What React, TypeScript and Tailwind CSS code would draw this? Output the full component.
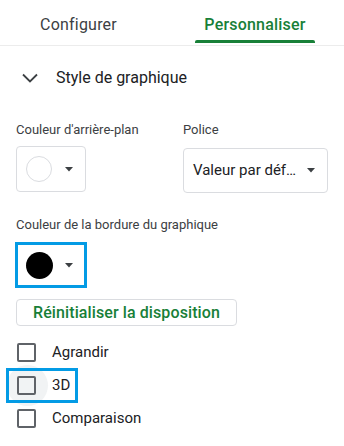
import React from "react";

const Arrow = () => (
  <svg width="10" height="5" viewBox="0 0 10 5" className="block">
    <path d="M1 0 L9 0 L5 4.5 Z" fill="#3c4043" />
  </svg>
);

const Checkbox = ({ label, highlight }: { label: string; highlight?: boolean }) => (
  <div className="relative flex items-center h-[33px]">
    {highlight && (
      <>
        <div className="absolute left-[7px] top-[-4px] w-[41px] h-[41px] rounded-full bg-[#f1f3f4]" />
        <div className="absolute left-[6px] top-[-1px] w-[72px] h-[35px] border-[3px] border-[#039be5]" />
      </>
    )}
    <div className="relative ml-[17px] w-[19px] h-[19px] border-2 border-[#5f6368] rounded-[2px]" />
    <span className="relative ml-[16px] text-[15px] text-[#202124]">{label}</span>
  </div>
);

export default function App() {
  return (
    <div className="w-[344px] h-[446px] bg-white overflow-hidden" style={{ fontFamily: "Roboto, 'Liberation Sans', sans-serif" }}>
      {/* Tabs */}
      <div className="flex h-[45px]">
        <div className="w-[157px] flex flex-col items-center">
          <div className="mt-[14px] h-[22px] leading-[22px] text-[16px] text-[#3c4043] tracking-[0.2px]">Configurer</div>
        </div>
        <div className="ml-[38px] w-[120px] flex flex-col items-center">
          <div className="mt-[14px] h-[22px] leading-[22px] text-[16px] text-[#188038] font-medium tracking-[0.2px]">Personnaliser</div>
          <div className="mt-[4px] w-full h-[3px] rounded-t-[2px] bg-[#188038]" />
        </div>
      </div>
      <div className="h-px bg-[#ececec]" />

      {/* Section header */}
      <div className="flex items-center h-[24px] mt-[20px]">
        <svg width="16" height="10" viewBox="0 0 16 10" className="ml-[22px]">
          <path d="M1 1.5 L8 8.5 L15 1.5" fill="none" stroke="#3c4043" strokeWidth="1.8" />
        </svg>
        <span className="ml-[18px] text-[16px] text-[#202124]">Style de graphique</span>
      </div>

      {/* Background + font */}
      <div className="flex mt-[32px]">
        <div className="ml-[16px] w-[168px]">
          <div className="text-[13px] leading-[16px] text-[#3c4043]">Couleur d'arrière-plan</div>
          <div className="mt-[8px] w-[70px] h-[46px] border border-[#dadce0] rounded-[4px] flex items-center">
            <div className="ml-[9px] w-[26px] h-[26px] rounded-full border border-[#dadce0]" />
            <div className="ml-[12px]"><Arrow /></div>
          </div>
        </div>
        <div className="ml-[-1px]">
          <div className="text-[13px] leading-[16px] text-[#3c4043]">Police</div>
          <div className="mt-[10px] w-[145px] h-[45px] border border-[#dadce0] rounded-[4px] flex items-center">
            <span className="ml-[9px] text-[15px] text-[#202124]">Valeur par déf…</span>
            <div className="ml-[10px]"><Arrow /></div>
          </div>
        </div>
      </div>

      {/* Border colour */}
      <div className="ml-[16px] mt-[24px] text-[13px] leading-[16px] text-[#3c4043]">Couleur de la bordure du graphique</div>
      <div className="ml-[15px] mt-[9px] w-[72px] h-[46px] border-[3px] border-[#039be5] flex items-center">
        <div className="ml-[8px] w-[27px] h-[27px] rounded-full bg-black" />
        <div className="ml-[11px]"><Arrow /></div>
      </div>

      {/* Reset */}
      <div className="ml-[16px] mt-[11px] w-[221px] h-[27px] border border-[#dadce0] rounded-[4px] flex items-center justify-center text-[16px] font-medium text-[#188038] tracking-[0.1px]">
        Réinitialiser la disposition
      </div>

      {/* Checkboxes */}
      <div className="mt-[10px] flex flex-col">
        <Checkbox label="Agrandir" />
        <Checkbox label="3D" highlight />
        <Checkbox label="Comparaison" />
      </div>
    </div>
  );
}
